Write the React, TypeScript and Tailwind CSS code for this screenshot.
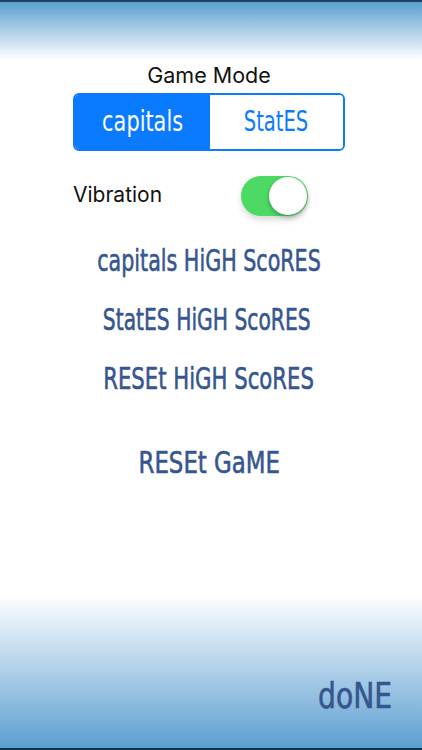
export default function App() {
  const hand = "font-['DejaVu_Sans_Condensed','DejaVu_Sans',sans-serif] text-[#36568f] whitespace-nowrap [-webkit-text-stroke:0.6px_#36568f]";
  return (
    <div className="w-[422px] h-[750px] flex flex-col bg-white overflow-hidden font-['Inter','Liberation_Sans',sans-serif]">
      <div className="h-[60px] shrink-0 border-t-2 border-[#1c3f63] bg-gradient-to-b from-[#5a9fd0] to-white" />
      <div className="flex-1 flex flex-col">
        <div className="w-[272px] ml-[73px] flex flex-col">
          <div className="h-[33px] flex items-center justify-center text-[21.5px] leading-none text-[#111] -mt-[1px] mb-[1px]">Game Mode</div>
          <div className="h-[58px] flex rounded-[6px] border-2 border-[#0a7aff] overflow-hidden font-['DejaVu_Sans_Condensed','DejaVu_Sans',sans-serif] text-[29px]">
            <div className="w-[135px] bg-[#0a7aff] text-white flex items-center justify-center">
              <span className="scale-x-[0.8]">capitals</span>
            </div>
            <div className="flex-1 bg-white text-[#0a7aff] flex items-center justify-center">
              <span className="scale-x-[0.75]">StatES</span>
            </div>
          </div>
          <div className="h-[40px] mt-[25px] flex items-center">
            <span className="text-[21px] leading-none text-[#111] -mt-[3px]">Vibration</span>
            <div className="ml-[79px] w-[67px] h-[40px] rounded-full bg-[#4cd964] flex items-center justify-end p-[1px] shadow-[0_4px_6px_rgba(0,0,0,0.15)]">
              <div className="w-[38px] h-[38px] rounded-full bg-white shadow-[0_2px_4px_rgba(0,0,0,0.3)]" />
            </div>
          </div>
        </div>
        <div className="flex flex-col items-center mt-[15px] w-[418px]">
          <div className={`${hand} h-[59px] flex items-center text-[31px] scale-x-[0.74]`}>capitals HiGH ScoRES</div>
          <div className={`${hand} h-[59px] flex items-center text-[31px] scale-x-[0.727] pr-[6px]`}>StatES HiGH ScoRES</div>
          <div className={`${hand} h-[59px] flex items-center text-[31px] scale-x-[0.76]`}>RESEt HiGH ScoRES</div>
          <div className={`${hand} h-[59px] mt-[25px] flex items-center text-[31px] scale-x-[0.82]`}>RESEt GaME</div>
        </div>
      </div>
      <div className="h-[155px] shrink-0 flex items-end justify-end pr-[30px] pb-[34px] border-b-2 border-[#143049] bg-gradient-to-b from-white to-[#5a9fd0]">
        <span className={`${hand} text-[36px] leading-none text-[#2f5590] scale-x-[0.87] origin-right`}>doNE</span>
      </div>
    </div>
  );
}
